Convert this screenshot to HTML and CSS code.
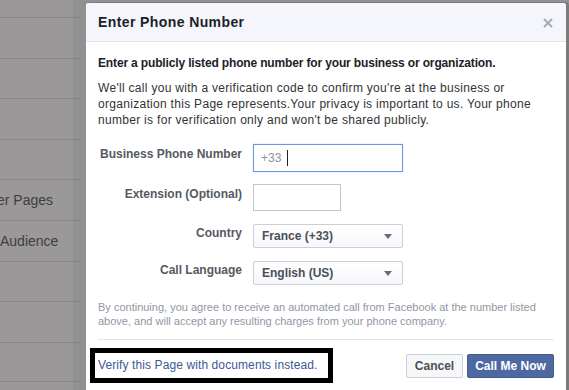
FILE: index.html
```html
<!DOCTYPE html>
<html lang="en">
<head>
    <meta charset="UTF-8">
    <title>Enter Phone Number</title>
    <link rel="stylesheet" href="styles.css">
</head>
<body>
    <ul class="sidebar">
        <li></li>
        <li></li>
        <li></li>
        <li></li>
        <li>er Pages</li>
        <li>Audience</li>
        <li></li>
        <li></li>
        <li></li>
    </ul>

    <div class="dialog">
        <div class="dialog-header">
            <h2>Enter Phone Number</h2>
            <a class="close" href="#">
                <svg width="10" height="10" viewBox="0 0 10 10"><path d="M1 1 L9 9 M9 1 L1 9" stroke="#a7a9ad" stroke-width="2"/></svg>
            </a>
        </div>
        <div class="dialog-body">
            <p class="lead">Enter a publicly listed phone number for your business or organization.</p>
            <p class="intro">We'll call you with a verification code to confirm you're at the business or organization this Page represents.Your privacy is important to us. Your phone number is for verification only and won't be shared publicly.</p>

            <form class="phone-form">
                <label>Business Phone Number</label>
                <div class="field phone focused"><span class="prefix">+33</span><span class="caret"></span></div>

                <label>Extension (Optional)</label>
                <div class="field ext"></div>

                <label>Country</label>
                <div class="select">France (+33)</div>

                <label>Call Language</label>
                <div class="select">English (US)</div>
            </form>

            <p class="legal">By continuing, you agree to receive an automated call from Facebook at the number listed above, and will accept any resulting charges from your phone company.</p>

            <div class="dialog-footer">
                <a class="docs-link" href="#">Verify this Page with documents instead.</a>
                <div class="actions">
                    <button type="button" class="btn cancel">Cancel</button>
                    <button type="button" class="btn primary">Call Me Now</button>
                </div>
            </div>
        </div>
    </div>
</body>
</html>
```
FILE: styles.css
```css
body {
    margin: 0;
    height: 390px;
    overflow: hidden;
    background-color: #9a9899;
    font-family: "Liberation Sans", Arial, sans-serif;
    font-size: 12px;
    color: #1d2129;
}
.sidebar {
    list-style: none;
    margin: 0;
    padding: 17px 0 0;
    width: 80px;
}
.sidebar li {
    height: 40.6px;
    box-sizing: border-box;
    border-top: 1px solid #8a8889;
    line-height: 40px;
    font-size: 14px;
    color: #3f3e3f;
    margin-left: -10px;
    white-space: nowrap;
}
.sidebar li:last-child {
    border-bottom: 1px solid #8a8889;
}
.sidebar li:nth-child(5) {
    text-indent: 10px;
    margin-left: -13px;
}
.sidebar li:nth-child(6) {
    text-indent: 10px;
}
.dialog {
    position: absolute;
    left: 86px;
    top: 3px;
    width: 480px;
    height: 387px;
    background-color: #fff;
    border-radius: 3px 3px 0 0;
    box-shadow: 0 0 0 13px rgba(60, 70, 60, 0.08), 2px 0 0 1px rgba(60, 60, 60, 0.25);
}
.dialog-header {
    height: 38px;
    background-color: #f5f6fb;
    border-bottom: 1px solid #e3e4e8;
    border-radius: 3px 3px 0 0;
    display: flex;
    align-items: center;
    justify-content: space-between;
    padding: 0 13px 0 12px;
}
.dialog-header h2 {
    margin: 0;
    font-size: 14px;
    letter-spacing: 0.4px;
    color: #1d2129;
}
.close {
    display: flex;
    margin-top: 2px;
}
.dialog-body {
    padding: 13px 12px 0;
}
.lead {
    margin: 0;
    font-weight: bold;
    line-height: 16px;
    letter-spacing: -0.15px;
}
.intro {
    margin: 9px 0 0;
    line-height: 16px;
    letter-spacing: 0.3px;
    color: #333;
}
.phone-form {
    display: grid;
    grid-template-columns: 144px auto;
    column-gap: 11px;
    row-gap: 12px;
    margin-top: 16px;
    justify-items: start;
}
.phone-form label {
    justify-self: end;
    font-weight: bold;
    color: #555a62;
    padding-top: 3px;
}
.field {
    box-sizing: border-box;
    border: 1px solid #bdc7d8;
    background-color: #fff;
    display: flex;
    align-items: center;
    padding: 0 7px;
}
.phone {
    width: 150px;
    height: 28px;
}
.focused {
    border-color: #6b94ec;
    box-shadow: 0 0 1px 0 #9ab6f0;
}
.prefix {
    color: #8d949e;
}
.caret {
    width: 1px;
    height: 16px;
    background-color: #1d2129;
    margin-left: 6px;
}
.ext {
    width: 88px;
    height: 27px;
}
.select {
    box-sizing: border-box;
    width: 150px;
    height: 24px;
    line-height: 22px;
    padding: 0 8px;
    border: 1px solid #ccd0d5;
    border-radius: 2px;
    background: linear-gradient(#fff, #f6f7fb);
    font-weight: bold;
    color: #4b4f56;
    position: relative;
    margin-top: 1px;
}
.select::after {
    content: "";
    position: absolute;
    right: 10px;
    top: 9px;
    border-left: 4px solid transparent;
    border-right: 4px solid transparent;
    border-top: 5px solid #6a6d73;
}
.legal {
    margin: 15px 0 0;
    font-size: 11px;
    line-height: 14px;
    color: #9197a3;
    padding-bottom: 11px;
    border-bottom: 1px solid #e5e5e5;
}
.dialog-footer {
    display: flex;
    justify-content: space-between;
    align-items: center;
    margin-top: 8px;
}
.docs-link {
    margin-left: -8px;
    width: 230px;
    height: 25px;
    line-height: 25px;
    padding-left: 3px;
    border: 5px solid #000;
    color: #3b5998;
    text-decoration: none;
    letter-spacing: 0.1px;
}
.actions {
    display: flex;
    gap: 4px;
}
.btn {
    height: 24px;
    padding: 0;
    border: 1px solid #ced0d4;
    border-radius: 2px;
    background-color: #f6f7f9;
    color: #4b4f56;
    font-family: inherit;
    font-size: 12px;
    font-weight: bold;
}
.btn.cancel {
    width: 57px;
}
.btn.primary {
    width: 87px;
    background-color: #4e69a2;
    border-color: #435a8b;
    color: #fff;
}
```
